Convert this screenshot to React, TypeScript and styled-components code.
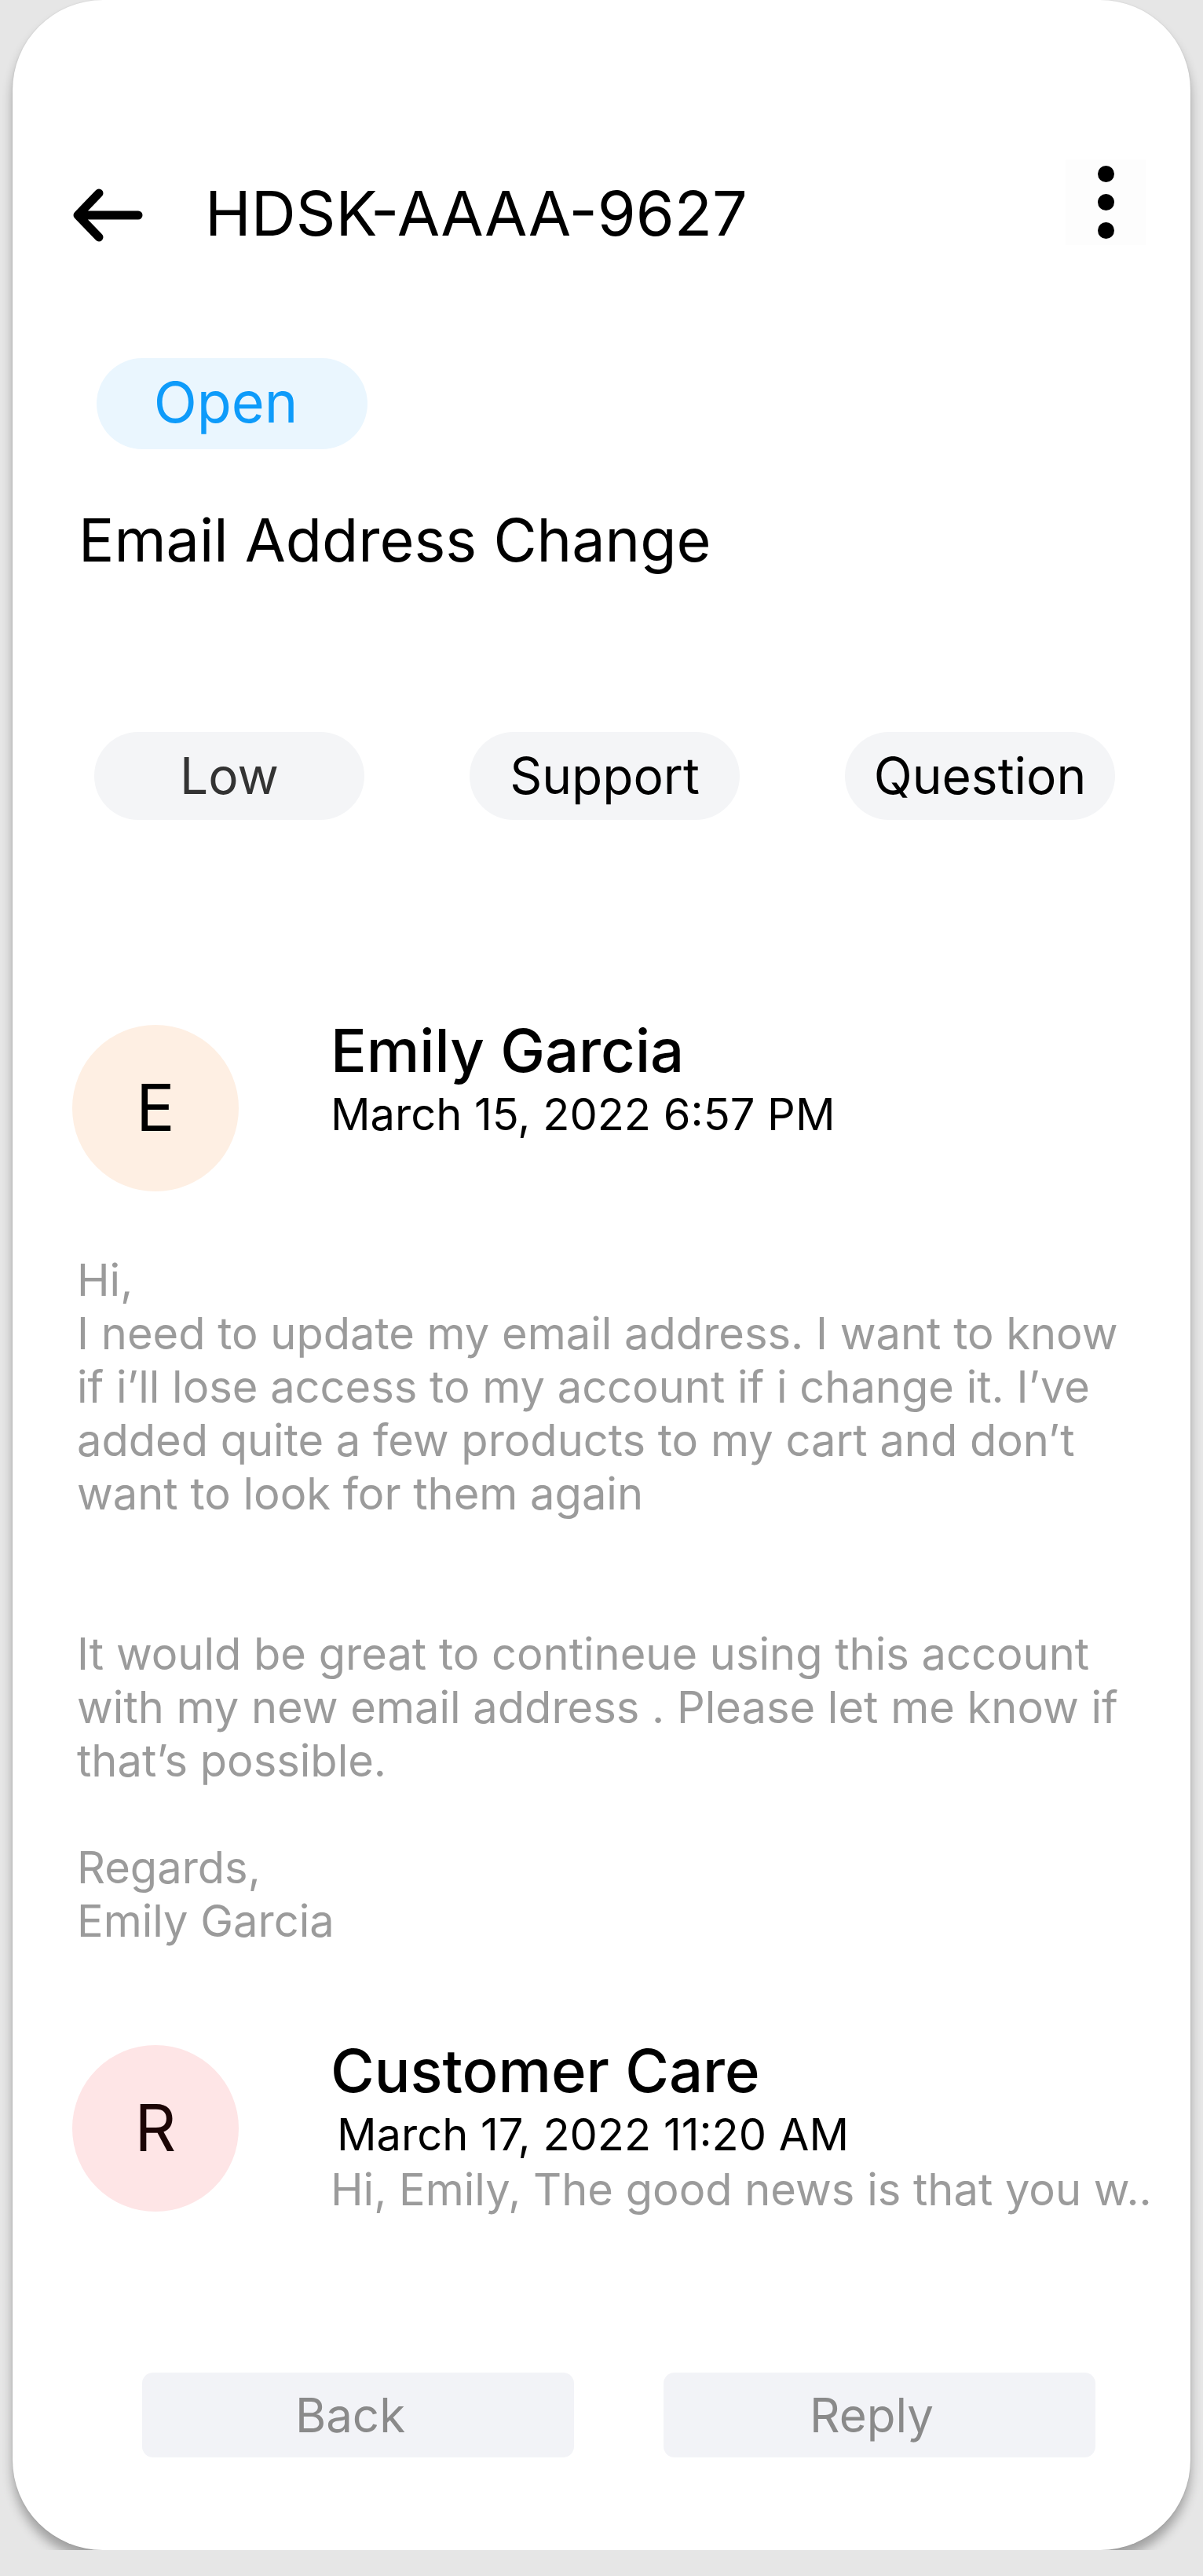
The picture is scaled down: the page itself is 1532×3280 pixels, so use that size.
import React from "react";
import styled, { createGlobalStyle } from "styled-components";

const GlobalStyle = createGlobalStyle`
  html, body {
    margin: 0;
    padding: 0;
    background: #e6e6e6;
  }
  body {
    font-family: "Inter", "Noto Sans", sans-serif;
    color: #000;
  }
  * { box-sizing: border-box; }
`;

const Card = styled.div`
  width: 1500px;
  margin: 0 auto;
  background: #ffffff;
  border-radius: 115px;
  box-shadow: 0 12px 14px rgba(0, 0, 0, 0.3), 0 0 2px rgba(0, 0, 0, 0.12);
  padding-bottom: 118px;
`;

const Header = styled.header`
  display: flex;
  align-items: flex-end;
  padding: 203px 57px 0 76px;
`;

const BackIcon = styled.svg`
  display: block;
  width: 90px;
  height: 72px;
  margin-bottom: 2px;
  flex-shrink: 0;
`;

const TicketId = styled.h1`
  flex: 1;
  margin: 0 0 1px 79px;
  font-size: 79px;
  line-height: 80px;
  font-weight: 400;
  letter-spacing: 0;
  color: #000;
`;

const MenuButton = styled.button`
  width: 102px;
  height: 109px;
  border: none;
  padding: 0;
  background: #fdfdfd;
  display: flex;
  flex-direction: column;
  align-items: center;
  justify-content: center;
  gap: 15px;
`;

const Dot = styled.span`
  width: 21px;
  height: 21px;
  border-radius: 50%;
  background: #000;
`;

const Main = styled.main`
  display: flex;
  flex-direction: column;
  align-items: flex-start;
  padding: 0 60px 0 76px;
`;

const StatusPill = styled.div`
  margin: 144px 0 0 31px;
  width: 345px;
  height: 116px;
  border-radius: 58px;
  background: #eaf6fe;
  color: #0e9bfa;
  font-size: 72px;
  display: flex;
  align-items: center;
  justify-content: center;
  padding: 0 16px 6px 0;
`;

const Subject = styled.h2`
  margin: 78px 0 0 8px;
  font-size: 75.5px;
  line-height: 1;
  font-weight: 400;
  color: #000;
`;

const TagRow = styled.div`
  margin: 206px 0 0 28px;
  width: 1300px;
  display: flex;
  justify-content: space-between;
`;

const Tag = styled.span<{ $tone?: string }>`
  width: 344px;
  height: 112px;
  border-radius: 56px;
  background: #f4f5f7;
  color: ${(p) => p.$tone || "#000"};
  font-size: 64px;
  display: flex;
  align-items: center;
  justify-content: center;
`;

const MessageHead = styled.div<{ $gap: number }>`
  margin-top: ${(p) => p.$gap}px;
  display: flex;
  align-items: flex-start;
`;

const Avatar = styled.div<{ $bg: string; $ink?: string }>`
  margin-top: 6px;
  width: 212px;
  height: 212px;
  border-radius: 50%;
  background: ${(p) => p.$bg};
  color: ${(p) => p.$ink || "#000"};
  font-size: 82px;
  display: flex;
  align-items: center;
  justify-content: center;
  flex-shrink: 0;
`;

const Meta = styled.div`
  margin-left: 117px;
  display: flex;
  flex-direction: column;
`;

const Author = styled.div`
  font-size: 76px;
  line-height: 1;
  font-weight: 500;
  color: #000;
`;

const Stamp = styled.div<{ $indent?: number }>`
  margin: 16px 0 0 ${(p) => p.$indent || 0}px;
  font-size: 56px;
  line-height: 1;
  color: #000;
`;

const Preview = styled.div`
  margin-top: 14px;
  font-size: 56px;
  line-height: 1;
  color: #9b9b9b;
  white-space: nowrap;
`;

const Body = styled.p`
  margin: 79px 0 0 6px;
  max-width: 1360px;
  font-size: 56px;
  line-height: 68px;
  color: #9b9b9b;
  white-space: pre-line;
`;

const Actions = styled.div`
  margin: 205px 0 0 89px;
  display: flex;
  gap: 114px;
`;

const ActionButton = styled.button`
  width: 550px;
  height: 108px;
  border: none;
  border-radius: 14px;
  background: #f2f3f7;
  color: #8a8a8a;
  font-family: "Inter", "Noto Sans", sans-serif;
  font-size: 60px;
  display: flex;
  align-items: center;
  justify-content: center;
  padding: 0 20px 0 0;
`;

const bodyText =
  "Hi,\nI need to update my email address. I want to know if i’ll lose access to my account if i change it. I’ve added quite a few products to my cart and don’t want to look for them again\n\n\nIt would be great to contineue using this account with my new email address . Please let me know if that’s possible.\n\nRegards,\nEmily Garcia";

export default function App() {
  return (
    <>
      <GlobalStyle />
      <Card>
        <Header>
          <BackIcon viewBox="0 0 90 72" fill="none">
            <path
              d="M84 36H8M34 8L7 36L34 64"
              stroke="#000"
              strokeWidth="11"
              strokeLinecap="round"
              strokeLinejoin="round"
            />
          </BackIcon>
          <TicketId>HDSK-AAAA-9627</TicketId>
          <MenuButton aria-label="More">
            <Dot />
            <Dot />
            <Dot />
          </MenuButton>
        </Header>
        <Main>
          <StatusPill>Open</StatusPill>
          <Subject>Email Address Change</Subject>
          <TagRow>
            <Tag $tone="#333">Low</Tag>
            <Tag>Support</Tag>
            <Tag>Question</Tag>
          </TagRow>

          <MessageHead $gap={255}>
            <Avatar $bg="#feefe3">E</Avatar>
            <Meta>
              <Author>Emily Garcia</Author>
              <Stamp>March 15, 2022 6:57 PM</Stamp>
            </Meta>
          </MessageHead>
          <Body>{bodyText}</Body>

          <MessageHead $gap={118}>
            <Avatar $bg="#fee5e6" $ink="#1c0505">R</Avatar>
            <Meta>
              <Author>Customer Care</Author>
              <Stamp $indent={8}>March 17, 2022 11:20 AM</Stamp>
              <Preview>Hi, Emily, The good news is that you w..</Preview>
            </Meta>
          </MessageHead>

          <Actions>
            <ActionButton>Back</ActionButton>
            <ActionButton>Reply</ActionButton>
          </Actions>
        </Main>
      </Card>
    </>
  );
}
